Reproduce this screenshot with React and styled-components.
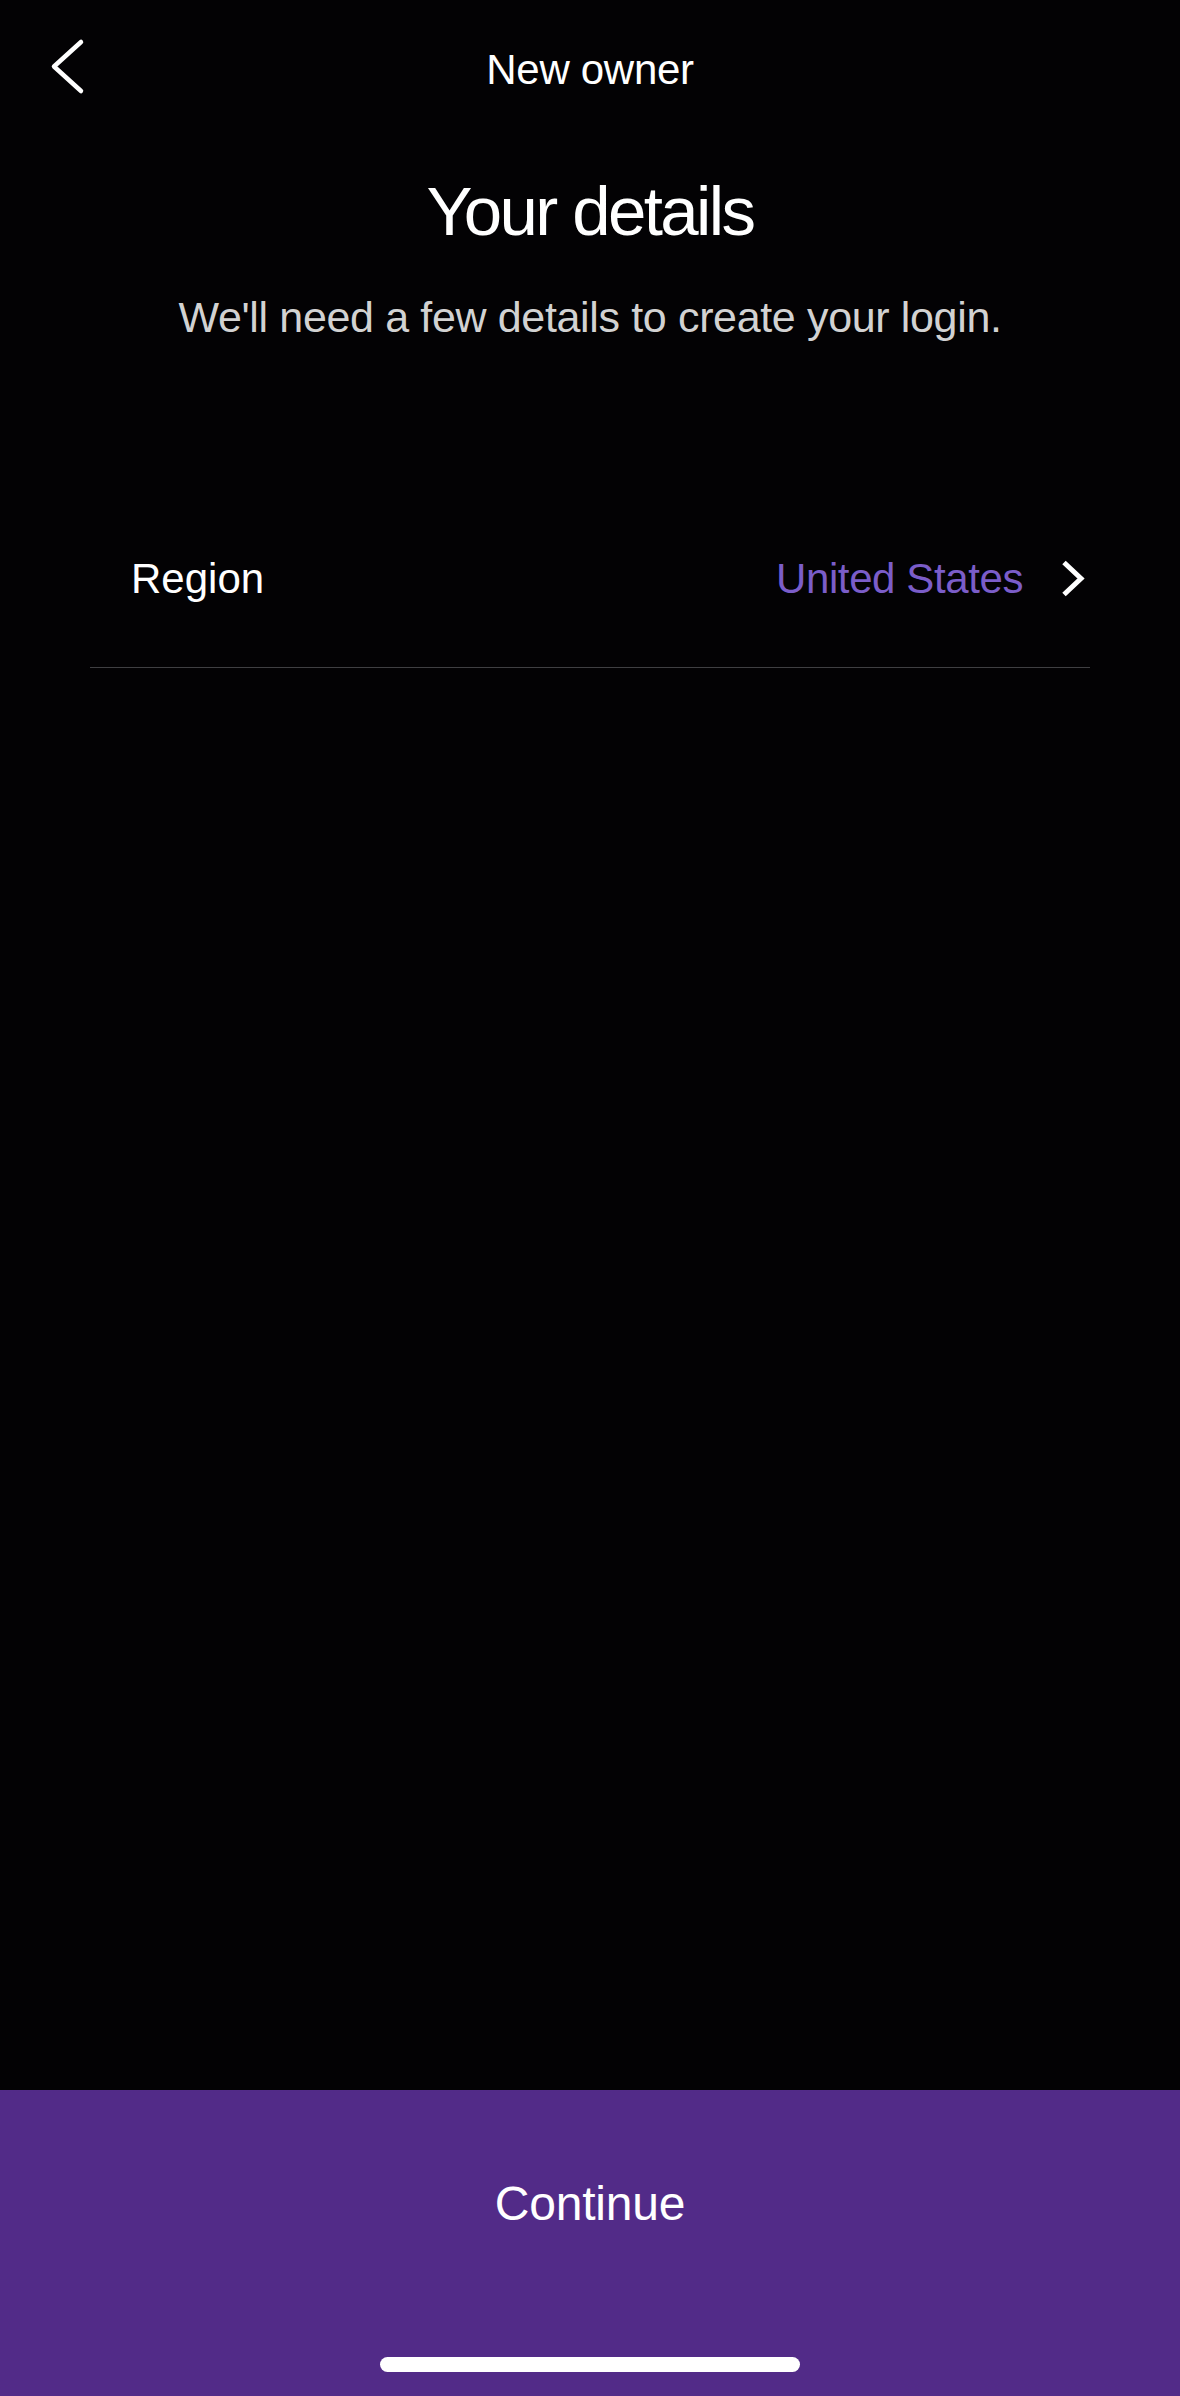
import React from 'react'
import styled, { createGlobalStyle } from 'styled-components'

const font = "'Liberation Sans', Arial, sans-serif"

const Global = createGlobalStyle`
    html, body {
        margin: 0;
        padding: 0;
        background: #030204;
    }
    #root {
        min-height: 100vh;
        display: flex;
        flex-direction: column;
    }
`
const Page = styled.div`
    flex: 1;
    display: flex;
    flex-direction: column;
    font-family: ${font};
    color: #fff;
    background: #030204;
`
const Header = styled.div`
    height: 140px;
    display: grid;
    grid-template-columns: 1fr auto 1fr;
    align-items: center;
`
const BackButton = styled.button`
    justify-self: start;
    display: flex;
    padding: 0 0 0 48px;
    background: none;
    border: none;
    cursor: pointer;
`
const HeaderTitle = styled.div`
    font-size: 42px;
    line-height: 1;
    letter-spacing: -0.3px;
`
const Title = styled.h1`
    margin: 37px 0 0;
    font-size: 69px;
    font-weight: normal;
    line-height: 1;
    letter-spacing: -2.6px;
    text-align: center;
`
const Subtitle = styled.p`
    margin: 50px 0 0;
    font-size: 43px;
    line-height: 1;
    letter-spacing: -0.35px;
    color: #d2d2d2;
    text-align: center;
`
const Row = styled.div`
    margin: 152px 90px 0;
    height: 176px;
    display: flex;
    align-items: center;
    padding: 0 4px 0 41px;
    border-bottom: 1.5px solid #3f3f42;
    cursor: pointer;
`
const Label = styled.span`
    flex: 1;
    font-size: 42px;
    line-height: 1;
`
const Value = styled.span`
    font-size: 42px;
    line-height: 1;
    letter-spacing: -0.4px;
    color: #7b5dc9;
    margin-right: 37px;
`
const Spacer = styled.div`
    flex: 1;
`
const Footer = styled.div`
    height: 306px;
    box-sizing: border-box;
    padding: 90px 0 24px;
    display: flex;
    flex-direction: column;
    align-items: center;
    background: #522b88;
`
const ContinueText = styled.div`
    font-size: 48px;
    line-height: 1;
    letter-spacing: -0.2px;
`
const HomeBar = styled.div`
    margin-top: auto;
    width: 420px;
    height: 15px;
    border-radius: 8px;
    background: #fff;
`

const BackIcon = () => (
    <svg width="40" height="70" viewBox="0 0 40 70">
        <path d="M33 7 L6 31.5 L33 56" fill="none" stroke="#fff" strokeWidth="4.5" strokeLinecap="round" strokeLinejoin="round" />
    </svg>
)

const ChevronRight = () => (
    <svg width="26" height="44" viewBox="0 0 26 44">
        <path d="M4 5.5 L21 21.5 L4 37.5" fill="none" stroke="#fff" strokeWidth="5" strokeLinecap="butt" strokeLinejoin="miter" />
    </svg>
)

export default function App() {
    return (
        <Page>
            <Global />
            <Header>
                <BackButton aria-label="Back">
                    <BackIcon />
                </BackButton>
                <HeaderTitle>New owner</HeaderTitle>
                <div />
            </Header>
            <Title>Your details</Title>
            <Subtitle>We'll need a few details to create your login.</Subtitle>
            <Row>
                <Label>Region</Label>
                <Value>United States</Value>
                <ChevronRight />
            </Row>
            <Spacer />
            <Footer>
                <ContinueText>Continue</ContinueText>
                <HomeBar />
            </Footer>
        </Page>
    )
}
